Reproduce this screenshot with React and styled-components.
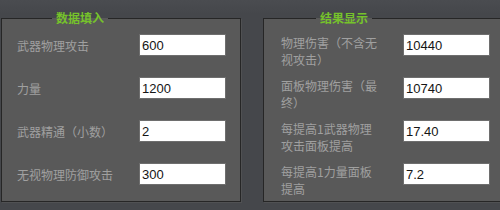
import React from 'react'
import styled, { createGlobalStyle } from 'styled-components'

const inputRows = [
  { label: '武器物理攻击', value: '600' },
  { label: '力量', value: '1200' },
  { label: '武器精通（小数）', value: '2' },
  { label: '无视物理防御攻击', value: '300' },
]

const resultRows = [
  { label: '物理伤害（不含无视攻击）', value: '10440' },
  { label: '面板物理伤害（最终）', value: '10740' },
  { label: '每提高1武器物理攻击面板提高', value: '17.40' },
  { label: '每提高1力量面板提高', value: '7.2' },
]

const App = () => {
  return (
    <>
      <GlobalStyle />
      <Screen>
        <Panel $width={240} $padLeft={15}>
          <Legend $offset={35}>数据填入</Legend>
          <Rows>
            {inputRows.map(row => (
              <React.Fragment key={row.label}>
                <Label $wrap={false}>{row.label}</Label>
                <Field readOnly value={row.value} />
              </React.Fragment>
            ))}
          </Rows>
        </Panel>
        <Panel $width={270} $padLeft={17}>
          <Legend $offset={35}>结果显示</Legend>
          <Rows>
            {resultRows.map(row => (
              <React.Fragment key={row.label}>
                <Label $wrap>{row.label}</Label>
                <Field readOnly value={row.value} />
              </React.Fragment>
            ))}
          </Rows>
        </Panel>
      </Screen>
    </>
  )
}

export default App

const GlobalStyle = createGlobalStyle`
  html, body {
    margin: 0;
    padding: 0;
    background: #45474b;
  }
`

const Screen = styled.div`
  display: flex;
  gap: 22px;
  width: 500px;
  height: 210px;
  box-sizing: border-box;
  padding: 11px 0 0 1px;
  overflow: hidden;
  background: linear-gradient(#4a4c50, #45474b 14px);
  font-family: 'Noto Sans CJK SC', 'Noto Sans', sans-serif;
`

const Panel = styled.fieldset`
  flex: none;
  width: ${props => props.$width}px;
  height: 191px;
  box-sizing: border-box;
  margin: 0;
  padding: 9px 0 0 ${props => props.$padLeft}px;
  border: 1px solid #262626;
  background: #595959;
  box-shadow: 1px 1px 0 #505153;
  min-width: 0;
`

const Legend = styled.legend`
  margin-left: ${props => props.$offset}px;
  padding: 0 4px;
  font-size: 12px;
  line-height: 14px;
  font-weight: bold;
  color: #76c22b;
`

const Rows = styled.div`
  display: grid;
  grid-template-columns: 122px 87px;
  grid-auto-rows: 22px;
  row-gap: 21px;
`

const Label = styled.div`
  align-self: ${props => (props.$wrap ? 'start' : 'center')};
  width: ${props => (props.$wrap ? '100px' : 'auto')};
  font-size: 12px;
  line-height: 17px;
  color: #a0a0a0;
  white-space: ${props => (props.$wrap ? 'normal' : 'nowrap')};
`

const Field = styled.input`
  width: 87px;
  height: 22px;
  box-sizing: border-box;
  margin: 0;
  padding: 0 0 0 2px;
  border: 1px solid #6e6e6e;
  background: #ffffff;
  font-family: 'Liberation Sans', Arial, sans-serif;
  font-size: 13px;
  color: #151515;
  outline: none;
`
